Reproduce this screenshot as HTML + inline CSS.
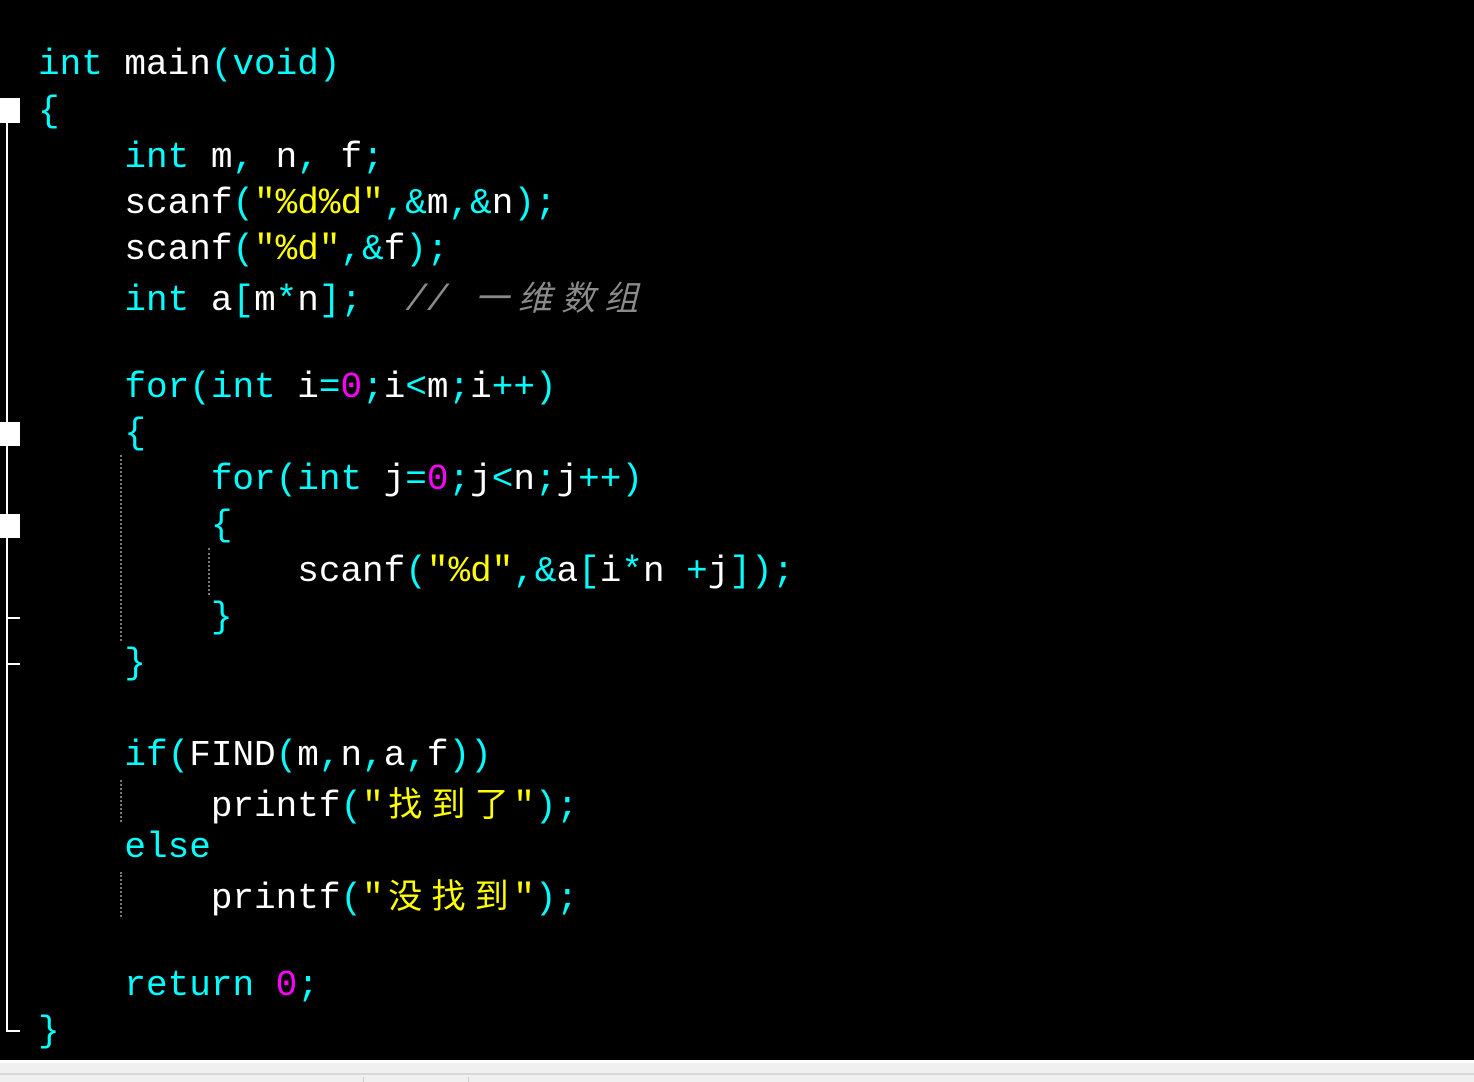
<!DOCTYPE html>
<html><head><meta charset="utf-8"><style>
html,body{margin:0;padding:0;background:#000;width:1474px;height:1082px;overflow:hidden;position:relative}
.l{position:absolute;left:38px;height:46px;line-height:46px;font-family:"Liberation Mono","Noto Sans CJK SC",monospace;font-size:36px;white-space:pre;color:#fff}
.k{color:#00ffff}.s{color:#ffff00}.n{color:#ff00ff}.c{color:#8a8a8a;font-style:italic}
.z{display:inline-block;width:43.2px;text-align:center;font-family:"Noto Sans CJK SC",sans-serif;font-size:34px;line-height:46px}
.g{position:absolute;border-left:2px dotted #777;width:0}
.b{position:absolute;background:#fff}
</style></head><body>
<div class="l" style="top:42px"><span class="k">int</span> main<span class="k">(void)</span></div>
<div class="l" style="top:89px"><span class="k">{</span></div>
<div class="l" style="top:135px">    <span class="k">int</span> m<span class="k">,</span> n<span class="k">,</span> f<span class="k">;</span></div>
<div class="l" style="top:181px">    scanf<span class="k">(</span><span class="s">"%d%d"</span><span class="k">,&amp;</span>m<span class="k">,&amp;</span>n<span class="k">);</span></div>
<div class="l" style="top:227px">    scanf<span class="k">(</span><span class="s">"%d"</span><span class="k">,&amp;</span>f<span class="k">);</span></div>
<div class="l" style="top:273px">    <span class="k">int</span> a<span class="k">[</span>m<span class="k">*</span>n<span class="k">];</span>  <span class="c">// <span class="z">一</span><span class="z">维</span><span class="z">数</span><span class="z">组</span></span></div>
<div class="l" style="top:365px">    <span class="k">for(int</span> i<span class="k">=</span><span class="n">0</span><span class="k">;</span>i<span class="k">&lt;</span>m<span class="k">;</span>i<span class="k">++)</span></div>
<div class="l" style="top:411px">    <span class="k">{</span></div>
<div class="l" style="top:457px">        <span class="k">for(int</span> j<span class="k">=</span><span class="n">0</span><span class="k">;</span>j<span class="k">&lt;</span>n<span class="k">;</span>j<span class="k">++)</span></div>
<div class="l" style="top:503px">        <span class="k">{</span></div>
<div class="l" style="top:549px">            scanf<span class="k">(</span><span class="s">"%d"</span><span class="k">,&amp;</span>a<span class="k">[</span>i<span class="k">*</span>n <span class="k">+</span>j<span class="k">]);</span></div>
<div class="l" style="top:595px">        <span class="k">}</span></div>
<div class="l" style="top:641px">    <span class="k">}</span></div>
<div class="l" style="top:733px">    <span class="k">if(</span>FIND<span class="k">(</span>m<span class="k">,</span>n<span class="k">,</span>a<span class="k">,</span>f<span class="k">))</span></div>
<div class="l" style="top:779px">        printf<span class="k">(</span><span class="s">"<span class="z">找</span><span class="z">到</span><span class="z">了</span>"</span><span class="k">);</span></div>
<div class="l" style="top:825px">    <span class="k">else</span></div>
<div class="l" style="top:871px">        printf<span class="k">(</span><span class="s">"<span class="z">没</span><span class="z">找</span><span class="z">到</span>"</span><span class="k">);</span></div>
<div class="l" style="top:963px">    <span class="k">return</span> <span class="n">0</span><span class="k">;</span></div>
<div class="l" style="top:1009px"><span class="k">}</span></div>

<div class="g" style="left:120px;top:455px;height:186px"></div>
<div class="g" style="left:208px;top:548px;height:47px"></div>
<div class="g" style="left:120px;top:780px;height:42px"></div>
<div class="g" style="left:120px;top:872px;height:45px"></div>

<div class="b" style="left:0;top:98px;width:20px;height:25px"></div>
<div class="b" style="left:6px;top:123px;width:2px;height:908px"></div>
<div class="b" style="left:0;top:422px;width:20px;height:24px"></div>
<div class="b" style="left:0;top:514px;width:20px;height:24px"></div>
<div class="b" style="left:6px;top:617px;width:14px;height:2px"></div>
<div class="b" style="left:6px;top:663px;width:14px;height:2px"></div>
<div class="b" style="left:6px;top:1030px;width:14px;height:2px"></div>

<div style="position:absolute;left:0;top:1060px;width:1474px;height:22px;background:#f0f0f0;border-top:3px solid #fff;box-sizing:border-box"></div>
<div style="position:absolute;left:0;top:1073px;width:1474px;height:2px;background:#d8d8d8"></div>
<div style="position:absolute;left:363px;top:1077px;width:1px;height:5px;background:#ccc"></div>
<div style="position:absolute;left:468px;top:1077px;width:1px;height:5px;background:#ccc"></div>
</body></html>
